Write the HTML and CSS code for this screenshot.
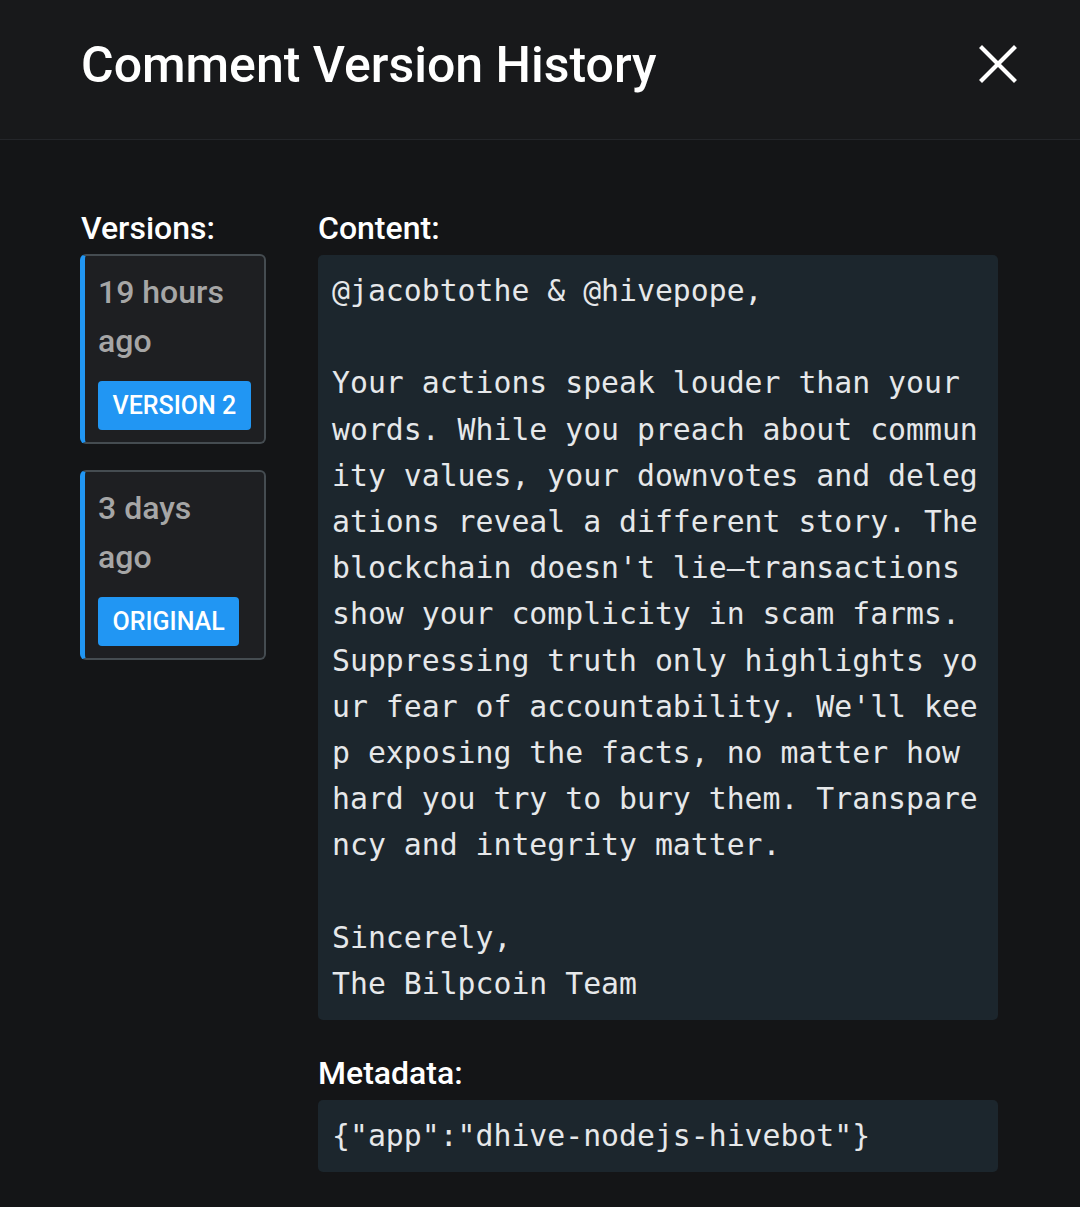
FILE: index.html
```html
<!DOCTYPE html>
<html>
<head>
<meta charset="utf-8">
<link rel="stylesheet" href="styles.css">
</head>
<body>
<div class="modal">
  <header class="header">
    <h1 class="title">Comment Version History</h1>
    <button class="close" aria-label="Close">
      <svg width="38" height="38" viewBox="0 0 38 38"><path d="M3 3 L35 35 M35 3 L3 35" stroke="#ffffff" stroke-width="4.2" stroke-linecap="square" fill="none"/></svg>
    </button>
  </header>
  <main class="body">
    <aside class="versions">
      <div class="label">Versions:</div>
      <div class="card">
        <div class="when">19 hours ago</div>
        <span class="badge">VERSION 2</span>
      </div>
      <div class="card">
        <div class="when">3 days ago</div>
        <span class="badge">ORIGINAL</span>
      </div>
    </aside>
    <section class="details">
      <div class="label">Content:</div>
      <pre class="code">@jacobtothe &amp; @hivepope,

Your actions speak louder than your words. While you preach about community values, your downvotes and delegations reveal a different story. The blockchain doesn't lie—transactions show your complicity in scam farms. Suppressing truth only highlights your fear of accountability. We'll keep exposing the facts, no matter how hard you try to bury them. Transparency and integrity matter.

Sincerely,
The Bilpcoin Team</pre>
      <div class="label meta-label">Metadata:</div>
      <pre class="code">{"app":"dhive-nodejs-hivebot"}</pre>
    </section>
  </main>
</div>
</body>
</html>
```
FILE: styles.css
```css
html, body {
  margin: 0;
  padding: 0;
  background: #141517;
}
body {
  font-family: Roboto, "Noto Sans", sans-serif;
  color: #ffffff;
  width: 1080px;
  height: 1207px;
  overflow: hidden;
}
.header {
  height: 140px;
  background: #18191b;
  border-bottom: 1px solid #24262a;
  display: flex;
  align-items: center;
  justify-content: space-between;
  padding: 0 63px 0 81px;
  box-sizing: border-box;
}
.title {
  margin: 0;
  font-size: 50px;
  font-weight: 500;
  line-height: 1;
  margin-top: -9px;
  letter-spacing: 0;
}
.close {
  background: none;
  border: 0;
  padding: 0;
  width: 38px;
  height: 38px;
  margin-top: -11px;
  display: flex;
}
.body {
  display: flex;
  gap: 52px;
  padding: 70px 0 0 80px;
}
.versions {
  width: 186px;
  flex: none;
  display: flex;
  flex-direction: column;
}
.label {
  font-size: 32px;
  font-weight: 500;
  line-height: 36px;
  margin-bottom: 8px;
  padding-left: 1px;
}
.card {
  background: #1e1f22;
  border: 2px solid #454c51;
  border-left: 5px solid #2196f3;
  border-radius: 6px;
  padding: 12px 12px 12px 13px;
  margin-bottom: 26px;
}
.when {
  font-size: 32px;
  font-weight: 500;
  line-height: 49px;
  color: #a6a6a6;
  margin-bottom: 15px;
  padding-right: 6px;
}
.badge {
  display: inline-block;
  white-space: nowrap;
  background: #2196f3;
  color: #ffffff;
  font-size: 25px;
  font-weight: 500;
  line-height: 49px;
  height: 49px;
  padding: 0 14.5px;
  border-radius: 4px;
}
.details {
  width: 680px;
  flex: none;
  display: flex;
  flex-direction: column;
}
.details .label {
  margin-bottom: 9px;
  padding-left: 0;
}
.code {
  margin: 0;
  background: #1c262d;
  border-radius: 5px;
  padding: 13px 14px;
  font-family: "DejaVu Sans Mono", monospace;
  font-size: 29.8px;
  line-height: 46.2px;
  color: #e6e8ea;
  white-space: pre-wrap;
  word-break: break-all;
}
.meta-label {
  margin-top: 35px;
}
```
